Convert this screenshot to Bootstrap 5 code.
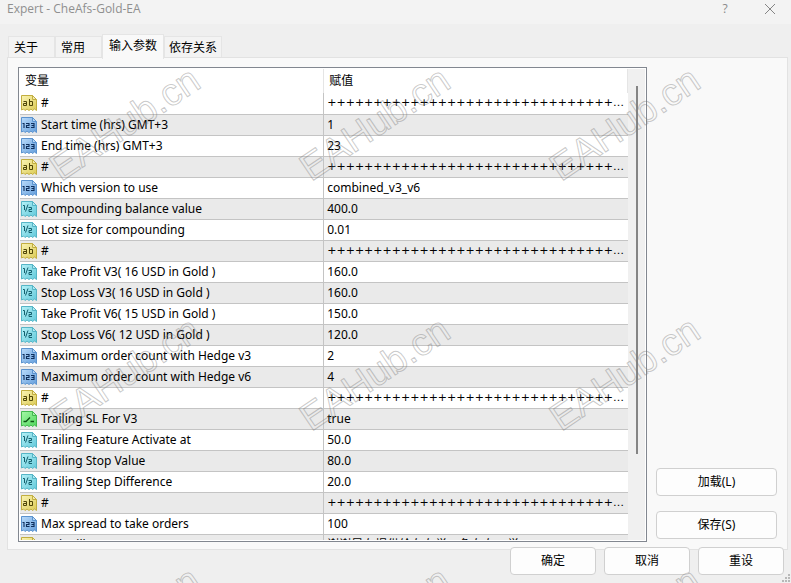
<!DOCTYPE html>
<html lang="zh-CN">
<head>
<meta charset="utf-8">
<meta name="viewport" content="width=device-width, initial-scale=1">
<title>Expert - CheAfs-Gold-EA</title>
<link href="https://cdn.jsdelivr.net/npm/bootstrap@5.3.0/dist/css/bootstrap.min.css" rel="stylesheet">
<style>
body{font-family:"Noto Sans","Noto Sans CJK SC",sans-serif;font-size:12px;line-height:20px;color:#000;background:#efefef}
.titlebar{height:24px;padding:0 14px 6px 7px;background:#f3f3f3;color:#8f8f8f;font-family:"Open Sans",sans-serif}
.titlebar button{width:14px;line-height:16px;color:#8a8a8a;font-size:12px}
.title-actions{gap:31px}
.tabs{padding:10px 8px 0;height:33px}
.tabs .nav-link{height:22px;padding:0 5px;color:#000;font-size:12px;line-height:21px;background:#f3f3f3;border:1px solid #e5e5e5;border-bottom:0;border-radius:0;margin:0}
.tabs .w-short{width:47px}
.tabs .nav-link.active{height:25px;padding:0 6px;line-height:21px;background:#f9f9f9;color:#000;margin-bottom:-1px;border-color:#e5e5e5;position:relative}
.pane{margin:0 3px 0 7px;padding:9px 10px 7px 10px;background:#f9f9f9;border:1px solid #e2e2e2;gap:9px;min-height:0}
.param-list{border:1px solid #828790;background:#fff;padding:1px;min-height:0}
.scroller{width:17px;background:#f0f0f0}
.thumb{width:2px;height:368px;margin-top:17px;background:#858585}
.param-table{table-layout:fixed;width:100%;font-size:12px}
.param-table th{height:24px;padding:0 5px;font-weight:400;border-right:1px solid #e5e5e5;vertical-align:middle}
.param-table td{height:21px;padding:0 3px;line-height:20px;border-bottom:1px solid #c4c4c4;white-space:nowrap;overflow:hidden;text-overflow:ellipsis}
.param-table td:first-child{border-right:1px solid #c4c4c4;padding-left:1px}
.param-table tbody tr:nth-child(even){background:#eaeaea}
.param-table col:first-child{width:50%}
.param-table svg{width:16px;height:16px;margin:0 4px 0 0;vertical-align:-4px}
.param-table td.pluses{font-family:"DejaVu Sans",sans-serif;font-size:11px}
.side{width:121px;gap:15px;padding-bottom:3px}
.dlg-btn{height:28px;padding:0;border:1px solid #d0d0d0;border-radius:4px;background:#fdfdfd;color:#000;font-size:12px;line-height:20px}
.footer-bar{margin-top:-3px;padding:0 7px 8px;gap:8px;z-index:1}
.footer-bar .dlg-btn{width:86px}
.watermark{position:absolute;inset:0;width:100%;height:100%;pointer-events:none;z-index:3}
.grip{position:absolute;right:1px;bottom:1px;width:8px;height:8px}
</style>
<script src="https://cdn.jsdelivr.net/npm/bootstrap@5.3.0/dist/js/bootstrap.bundle.min.js"></script>
</head>
<body>
<svg class="position-absolute" width="0" height="0" aria-hidden="true">
<defs>
<linearGradient id="gy" x2="1" y2="1"><stop stop-color="#faf4b4"/><stop offset="1" stop-color="#dccb55"/></linearGradient>
<linearGradient id="gb" x2="1" y2="1"><stop stop-color="#b9dbfb"/><stop offset="1" stop-color="#659edb"/></linearGradient>
<linearGradient id="gc" x2="1" y2="1"><stop stop-color="#b5f1f7"/><stop offset="1" stop-color="#62c9da"/></linearGradient>
<linearGradient id="gg" x2="1" y2="1"><stop stop-color="#a4f8a6"/><stop offset="1" stop-color="#4fd65c"/></linearGradient>
</defs>
<symbol id="sheet" viewBox="0 0 16 16"><path d="M.5.5h11l4 4v11l-2-1.5-2 1.5-1.500-1.500-2 1.500-2-1.500-2 1.500-1.500-1.500-2 1z" /><path d="M11.500.5v4h4z" fill="#fff" fill-opacity=".35"/></symbol>
<symbol id="i-ab" viewBox="0 0 16 16"><use href="#sheet" fill="url(#gy)" stroke="#c2ae40"/><path d="M2.500 6.500h3v4H2.500v-2H5.500M8.500 4v6.500h3v-4h-3" fill="none" stroke="#4f4608" stroke-width="1"/></symbol>
<symbol id="i-123" viewBox="0 0 16 16"><use href="#sheet" fill="url(#gb)" stroke="#5b93cf"/><path d="M1.500 6.500h1.500V11M5 6.500h3v2H5.500v2H8.500M10 6.500h3v4h-3M10.500 8.500H13" fill="none" stroke="#0f2f5c" stroke-width="1.100"/></symbol>
<symbol id="i-half" viewBox="0 0 16 16"><use href="#sheet" fill="url(#gc)" stroke="#55b5c6"/><path d="M2 4.500h1.500V9M4.500 10.500L7 3.500M7.500 6.500h3v2h-2.500v2h3" fill="none" stroke="#14606e" stroke-width="1"/></symbol>
<symbol id="i-bool" viewBox="0 0 16 16"><use href="#sheet" fill="url(#gg)" stroke="#43b84f"/><path d="M2.500 10.500h2.500L9 6.500M9.500 10.500h3.500" fill="none" stroke="#0d5415" stroke-width="1.300"/></symbol>
</svg>
<main class="d-flex flex-column vh-100 position-relative overflow-hidden">
<header class="titlebar d-flex justify-content-between align-items-center flex-shrink-0">
<span>Expert - CheAfs-Gold-EA</span>
<div class="title-actions d-flex align-items-center">
<button type="button" class="border-0 bg-transparent p-0" aria-label="Help">?</button>
<button type="button" class="border-0 bg-transparent p-0 d-flex" aria-label="Close"><svg width="14" height="12" viewBox="0 0 14 12"><path d="M2 1l10 10M12 1L2 11" stroke="#858585" fill="none"/></svg></button>
</div>
</header>
<nav class="tabs nav nav-tabs border-0 align-items-end flex-shrink-0" aria-label="设置">
<a href="#" class="nav-link w-short">关于</a>
<a href="#" class="nav-link w-short">常用</a>
<a href="#" class="nav-link active" aria-current="page">输入参数</a>
<a href="#" class="nav-link px-1">依存关系</a>
</nav>
<section class="pane d-flex flex-grow-1">
<div class="param-list d-flex flex-grow-1">
<div class="flex-grow-1 overflow-hidden">
<table class="param-table">
<colgroup><col><col></colgroup>
<thead><tr><th scope="col">变量</th><th scope="col">赋值</th></tr></thead>
<tbody>
<tr><td><svg><use href="#i-ab"/></svg>#</td><td class="pluses">++++++++++++++++++++++++++++++++++++++++</td></tr>
<tr><td><svg><use href="#i-123"/></svg>Start time (hrs) GMT+3</td><td>1</td></tr>
<tr><td><svg><use href="#i-123"/></svg>End time (hrs) GMT+3</td><td>23</td></tr>
<tr><td><svg><use href="#i-ab"/></svg>#</td><td class="pluses">++++++++++++++++++++++++++++++++++++++++</td></tr>
<tr><td><svg><use href="#i-123"/></svg>Which version to use</td><td>combined_v3_v6</td></tr>
<tr><td><svg><use href="#i-half"/></svg>Compounding balance value</td><td>400.0</td></tr>
<tr><td><svg><use href="#i-half"/></svg>Lot size for compounding</td><td>0.01</td></tr>
<tr><td><svg><use href="#i-ab"/></svg>#</td><td class="pluses">++++++++++++++++++++++++++++++++++++++++</td></tr>
<tr><td><svg><use href="#i-half"/></svg>Take Profit V3( 16 USD in Gold )</td><td>160.0</td></tr>
<tr><td><svg><use href="#i-half"/></svg>Stop Loss V3( 16 USD in Gold )</td><td>160.0</td></tr>
<tr><td><svg><use href="#i-half"/></svg>Take Profit V6( 15 USD in Gold )</td><td>150.0</td></tr>
<tr><td><svg><use href="#i-half"/></svg>Stop Loss V6( 12 USD in Gold )</td><td>120.0</td></tr>
<tr><td><svg><use href="#i-123"/></svg>Maximum order count with Hedge v3</td><td>2</td></tr>
<tr><td><svg><use href="#i-123"/></svg>Maximum order count with Hedge v6</td><td>4</td></tr>
<tr><td><svg><use href="#i-ab"/></svg>#</td><td class="pluses">++++++++++++++++++++++++++++++++++++++++</td></tr>
<tr><td><svg><use href="#i-bool"/></svg>Trailing SL For V3</td><td>true</td></tr>
<tr><td><svg><use href="#i-half"/></svg>Trailing Feature Activate at</td><td>50.0</td></tr>
<tr><td><svg><use href="#i-half"/></svg>Trailing Stop Value</td><td>80.0</td></tr>
<tr><td><svg><use href="#i-half"/></svg>Trailing Step Difference</td><td>20.0</td></tr>
<tr><td><svg><use href="#i-ab"/></svg>#</td><td class="pluses">++++++++++++++++++++++++++++++++++++++++</td></tr>
<tr><td><svg><use href="#i-123"/></svg>Max spread to take orders</td><td>100</td></tr>
<tr><td><svg><use href="#i-ab"/></svg>- Ed Will E</td><td>谢谢是在提供给在在学，免在在一学</td></tr>
</tbody>
</table>
</div>
<div class="scroller d-flex justify-content-center flex-shrink-0"><div class="thumb"></div></div>
</div>
<aside class="side d-flex flex-column justify-content-end flex-shrink-0">
<button type="button" class="btn dlg-btn">加载(L)</button>
<button type="button" class="btn dlg-btn">保存(S)</button>
</aside>
</section>
<footer class="footer-bar d-flex justify-content-end flex-shrink-0">
<button type="button" class="btn dlg-btn">确定</button>
<button type="button" class="btn dlg-btn">取消</button>
<button type="button" class="btn dlg-btn">重设</button>
</footer>
<svg class="grip" viewBox="0 0 8 8" aria-hidden="true"><path d="M6 0h2v2H6zM3 3h2v2H3zM6 3h2v2H6zM0 6h2v2H0zM3 6h2v2H3zM6 6h2v2H6z" fill="#b8b8b8"/></svg>
<svg class="watermark" aria-hidden="true" font-family="Liberation Sans, sans-serif" font-size="38" fill="none" stroke="#777" stroke-opacity=".4">
<text transform="translate(61 182) rotate(-34)">EAHub.cn</text>
<text transform="translate(311 182) rotate(-34)">EAHub.cn</text>
<text transform="translate(561 182) rotate(-34)">EAHub.cn</text>
<text transform="translate(61 432) rotate(-34)">EAHub.cn</text>
<text transform="translate(311 432) rotate(-34)">EAHub.cn</text>
<text transform="translate(561 432) rotate(-34)">EAHub.cn</text>
<text transform="translate(61 682) rotate(-34)">EAHub.cn</text>
<text transform="translate(311 682) rotate(-34)">EAHub.cn</text>
<text transform="translate(561 682) rotate(-34)">EAHub.cn</text>
</svg>
</main>
</body>
</html>
